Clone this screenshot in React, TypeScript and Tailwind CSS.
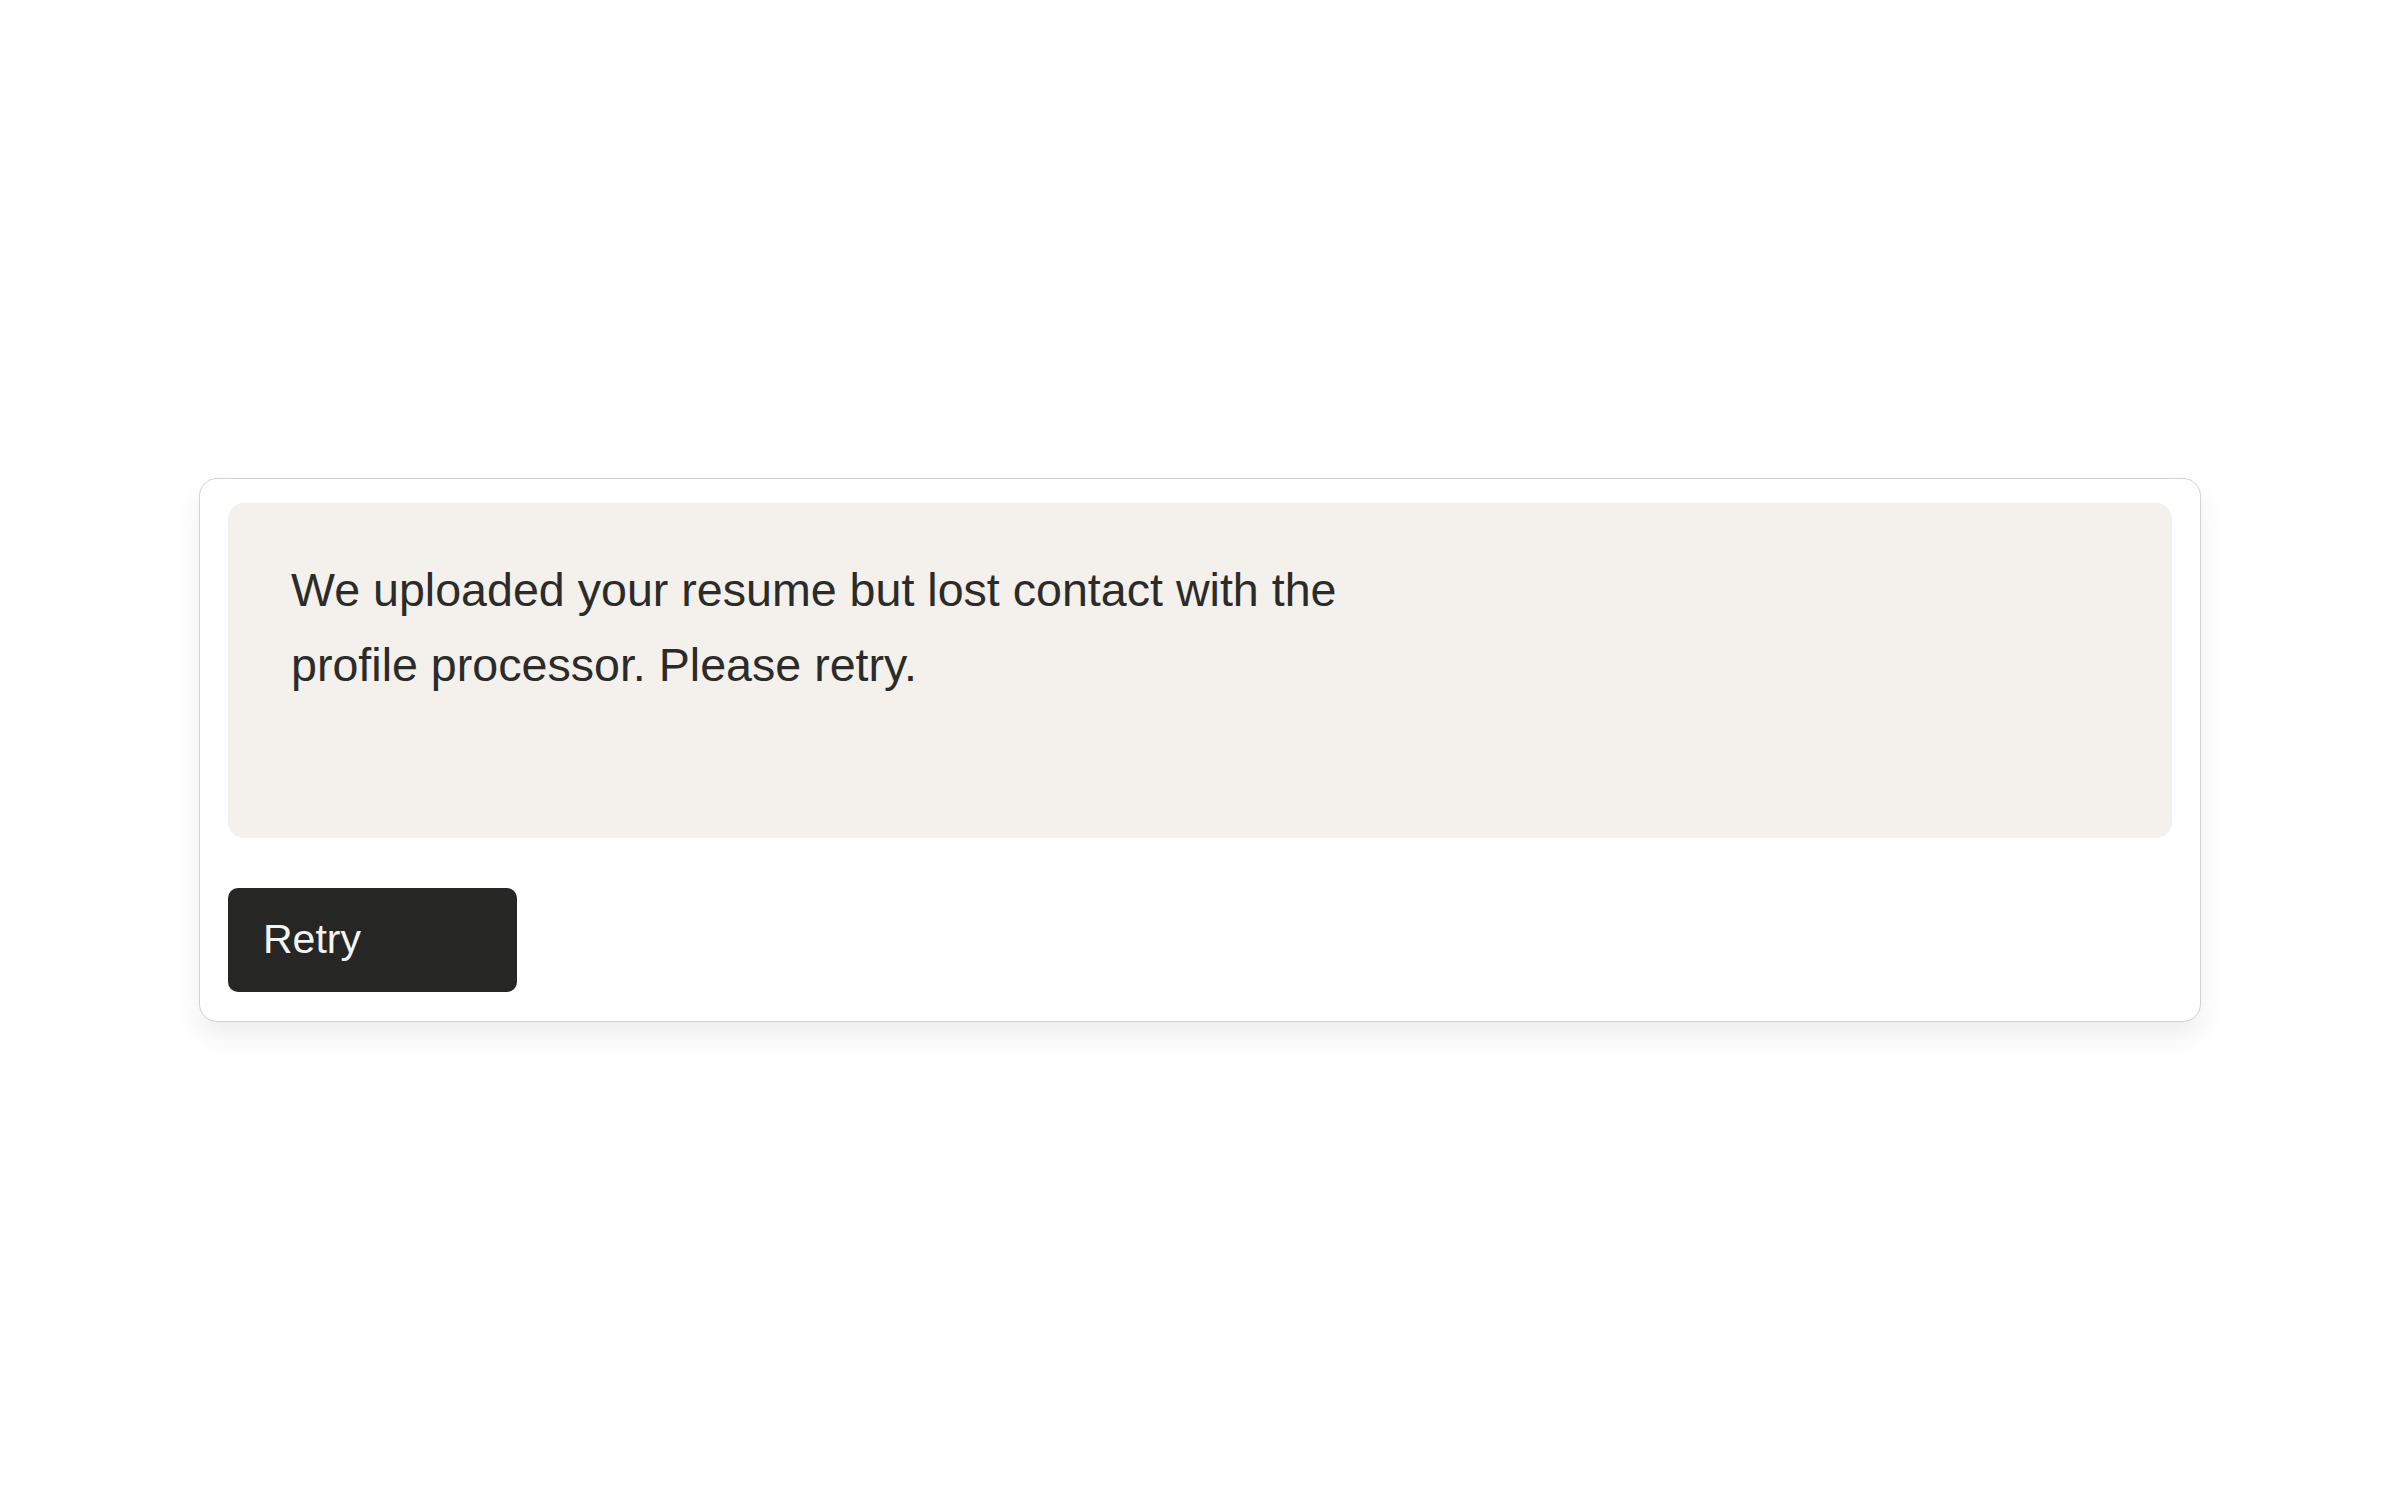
export default function App() {
  return (
    <div
      className="min-h-screen w-full bg-white flex items-center justify-center"
      style={{ fontFamily: '"Liberation Sans", Arial, sans-serif' }}
    >
      <div className="w-[2002px] rounded-[18px] border border-[#d2d2d2] bg-white pt-6 px-7 pb-[29px] shadow-[0_14px_28px_rgba(0,0,0,0.07)]">
        {/* Message */}
        <div className="h-[335px] rounded-[16px] bg-[#f4f0eb] pt-[50px] pl-[63px] pr-16">
          <p className="max-w-[1100px] text-[46.6px] leading-[75px] text-[#2b2c29]">
            We uploaded your resume but lost contact with the profile processor. Please retry.
          </p>
        </div>

        {/* Action */}
        <div className="mt-[50px] flex">
          <button className="w-[289px] h-[104px] rounded-[10px] bg-[#262725] pl-[35px] flex items-center text-[41px] text-[#f4f4f2]">
            Retry
          </button>
        </div>
      </div>
    </div>
  )
}
